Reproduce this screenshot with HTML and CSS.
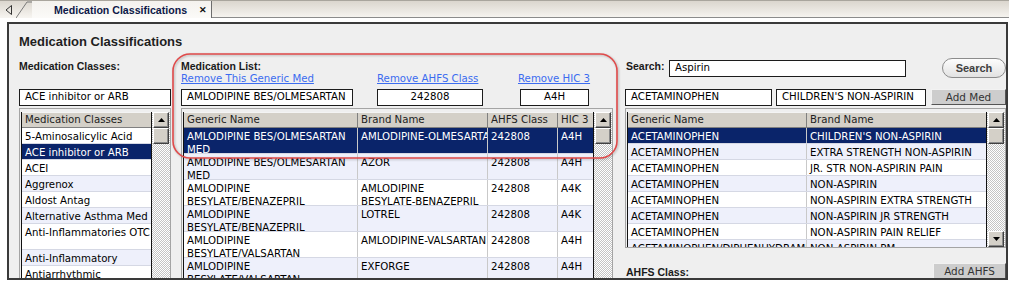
FILE: index.html
```html
<!DOCTYPE html>
<html lang="en">
<head>
    <meta charset="UTF-8">
    <title>Medication Classifications</title>
    <link rel="stylesheet" href="styles.css">
</head>
<body>
    <div class="tabbar">
        <div class="tab-nav">
            <svg width="8" height="10" viewBox="0 0 8 10"><polygon points="6.5,0.5 1,5 6.5,9.5" fill="none" stroke="#333" stroke-width="1"/></svg>
        </div>
        <svg class="tab-slant" width="16" height="17" viewBox="0 0 16 17"><path d="M0 17 L11 1 L16 1" fill="none" stroke="#7a7a7a" stroke-width="1"/></svg>
        <div class="tab">Medication Classifications <span class="tab-close">&#10005;</span></div>
        <div class="tab-rest"></div>
    </div>
    <div class="strip"></div>

    <div class="panel">
        <h1 class="title">Medication Classifications</h1>

        <div class="layout">
            <!-- classes -->
            <div class="col col-left">
                <div class="head">
                    <div class="label">Medication Classes:</div>
                </div>
                <div class="field">ACE inhibitor or ARB</div>
                <div class="frame">
                    <div class="grid-body">
                        <div class="row hd cols-one"><div>Medication Classes</div></div>
                        <div class="row cols-one"><div>5-Aminosalicylic Acid</div></div>
                        <div class="row sel cols-one"><div>ACE inhibitor or ARB</div></div>
                        <div class="row cols-one"><div>ACEI</div></div>
                        <div class="row alt cols-one"><div>Aggrenox</div></div>
                        <div class="row cols-one"><div>Aldost Antag</div></div>
                        <div class="row alt cols-one"><div>Alternative Asthma Med</div></div>
                        <div class="row tall cols-one"><div>Anti-Inflammatories OTC</div></div>
                        <div class="row alt cols-one"><div>Anti-Inflammatory</div></div>
                        <div class="row cols-one"><div>Antiarrhythmic</div></div>
                    </div>
                    <div class="scroll">
                        <div class="sb-btn"><svg width="7" height="4" viewBox="0 0 7 4"><polygon points="3.5,0 7,4 0,4" fill="#000"/></svg></div>
                        <div class="sb-btn"></div>
                    </div>
                </div>
            </div>

            <!-- medication list -->
            <div class="col col-mid">
                <div class="head">
                    <div class="label">Medication List:</div>
                    <div class="links">
                        <a class="link" href="#">Remove This Generic Med</a>
                        <a class="link" href="#">Remove AHFS Class</a>
                        <a class="link" href="#">Remove HIC 3</a>
                    </div>
                </div>
                <div class="fields">
                    <div class="field f-generic">AMLODIPINE BES/OLMESARTAN</div>
                    <div class="field f-ahfs center">242808</div>
                    <div class="field f-hic center">A4H</div>
                </div>
                <div class="frame">
                    <div class="grid-body">
                        <div class="row hd cols-mid"><div>Generic Name</div><div>Brand Name</div><div>AHFS Class</div><div>HIC 3</div></div>
                        <div class="row tall sel cols-mid"><div>AMLODIPINE BES/OLMESARTAN<br>MED</div><div>AMLODIPINE-OLMESARTAN</div><div>242808</div><div>A4H</div></div>
                        <div class="row tall alt cols-mid"><div>AMLODIPINE BES/OLMESARTAN<br>MED</div><div>AZOR</div><div>242808</div><div>A4H</div></div>
                        <div class="row tall cols-mid"><div>AMLODIPINE<br>BESYLATE/BENAZEPRIL</div><div>AMLODIPINE<br>BESYLATE-BENAZEPRIL</div><div>242808</div><div>A4K</div></div>
                        <div class="row tall alt cols-mid"><div>AMLODIPINE<br>BESYLATE/BENAZEPRIL</div><div>LOTREL</div><div>242808</div><div>A4K</div></div>
                        <div class="row tall cols-mid"><div>AMLODIPINE<br>BESYLATE/VALSARTAN</div><div>AMLODIPINE-VALSARTAN</div><div>242808</div><div>A4H</div></div>
                        <div class="row tall alt cols-mid"><div>AMLODIPINE<br>BESYLATE/VALSARTAN</div><div>EXFORGE</div><div>242808</div><div>A4H</div></div>
                    </div>
                    <div class="scroll">
                        <div class="sb-btn"><svg width="7" height="4" viewBox="0 0 7 4"><polygon points="3.5,0 7,4 0,4" fill="#000"/></svg></div>
                        <div class="sb-btn"></div>
                    </div>
                </div>
            </div>

            <!-- search -->
            <div class="col col-right">
                <div class="head search-head">
                    <div class="label">Search:</div>
                    <div class="field f-search">Aspirin</div>
                    <button class="btn-search">Search</button>
                </div>
                <div class="fields-right">
                    <div class="field f-rgeneric">ACETAMINOPHEN</div>
                    <div class="field f-rbrand">CHILDREN'S NON-ASPIRIN</div>
                    <button class="btn btn-addmed">Add Med</button>
                </div>
                <div class="frame frame-fixed">
                    <div class="grid-body">
                        <div class="row hd cols-right"><div>Generic Name</div><div>Brand Name</div></div>
                        <div class="row sel cols-right"><div>ACETAMINOPHEN</div><div>CHILDREN'S NON-ASPIRIN</div></div>
                        <div class="row alt cols-right"><div>ACETAMINOPHEN</div><div>EXTRA STRENGTH NON-ASPIRIN</div></div>
                        <div class="row cols-right"><div>ACETAMINOPHEN</div><div>JR. STR NON-ASPIRIN PAIN</div></div>
                        <div class="row alt cols-right"><div>ACETAMINOPHEN</div><div>NON-ASPIRIN</div></div>
                        <div class="row cols-right"><div>ACETAMINOPHEN</div><div>NON-ASPIRIN EXTRA STRENGTH</div></div>
                        <div class="row alt cols-right"><div>ACETAMINOPHEN</div><div>NON-ASPIRIN JR STRENGTH</div></div>
                        <div class="row cols-right"><div>ACETAMINOPHEN</div><div>NON-ASPIRIN PAIN RELIEF</div></div>
                        <div class="row alt cols-right"><div>ACETAMINOPHEN/DIPHENHYDRAMINE</div><div>NON-ASPIRIN PM</div></div>
                    </div>
                    <div class="scroll">
                        <div class="sb-btn"><svg width="7" height="4" viewBox="0 0 7 4"><polygon points="3.5,0 7,4 0,4" fill="#000"/></svg></div>
                        <div class="sb-btn"></div>
                        <div class="sb-btn sb-down"><svg width="7" height="4" viewBox="0 0 7 4"><polygon points="0,0 7,0 3.5,4" fill="#000"/></svg></div>
                    </div>
                </div>
                <div class="foot">
                    <div class="label">AHFS Class:</div>
                    <button class="btn btn-addahfs">Add AHFS</button>
                </div>
            </div>
        </div>

        <svg class="highlight" width="446" height="106" viewBox="0 0 446 106">
            <rect x="1" y="1" width="444" height="104" rx="17" ry="17" fill="none" stroke="#e04a4a" stroke-width="1.6"/>
        </svg>
    </div>
</body>
</html>
```

FILE: styles.css
```css
body {
    margin: 0;
    width: 1009px;
    height: 281px;
    overflow: hidden;
    background-color: #fff;
    font-family: "DejaVu Sans", Verdana, sans-serif;
    font-size: 10.2px;
    color: #000;
}

/* tab strip */
.tabbar {
    display: flex;
    height: 18px;
    box-sizing: border-box;
    border-top: 1px solid #a9a59d;
    background: linear-gradient(#dbd6ce, #f7f5f1);
}
.tab-nav {
    width: 14px;
    display: flex;
    align-items: center;
    justify-content: center;
    padding-left: 2px;
}
.tab-slant {
    display: block;
}
.tab {
    width: 180px;
    box-sizing: border-box;
    display: flex;
    align-items: center;
    padding-left: 22px;
    background: linear-gradient(#f4f2ee, #fbfaf8);
    border-right: 1px solid #6d6d6d;
    font-family: "Liberation Sans", Arial, sans-serif;
    font-weight: bold;
    font-size: 10.6px;
    color: #0d1848;
}
.tab-close {
    margin-left: 12px;
    color: #111;
    font-size: 9px;
    font-weight: bold;
}
.tab-rest {
    flex: 1;
    border-bottom: 1px solid #8b8b8b;
}
.strip {
    height: 4px;
}

/* main panel */
.panel {
    position: relative;
    margin-left: 7px;
    width: 1001px;
    height: 258px;
    box-sizing: border-box;
    border: 2px solid #3a3a3a;
    background-color: #efefef;
    padding: 10px 0 0 10px;
    overflow: hidden;
}
.title {
    margin: 0;
    font-family: "Liberation Sans", Arial, sans-serif;
    font-weight: bold;
    font-size: 13px;
    line-height: 15px;
    color: #1e1e1e;
}
.layout {
    display: flex;
    margin-top: 9px;
}
.col-left {
    width: 152px;
    margin-right: 10px;
}
.col-mid {
    width: 432px;
    margin-right: 12px;
}
.col-right {
    width: 381px;
}
.head {
    height: 31px;
    box-sizing: border-box;
    padding-top: 1.5px;
}
.label {
    font-family: "Liberation Sans", Arial, sans-serif;
    font-weight: bold;
    font-size: 10.5px;
    line-height: 13px;
    color: #1a1a1a;
}
.links {
    display: grid;
    grid-template-columns: 196px 141px auto;
    line-height: 12px;
}
.link {
    color: #3b6cf0;
    text-decoration: underline;
    justify-self: start;
}

/* text boxes */
.field {
    box-sizing: border-box;
    height: 17px;
    border: 1px solid #1c1c1c;
    background-color: #fff;
    padding: 0 5px;
    line-height: 14px;
    white-space: nowrap;
    overflow: hidden;
}
.center {
    text-align: center;
}
.fields {
    display: grid;
    grid-template-columns: 196px 143px auto;
}
.f-generic { width: 172px; }
.f-ahfs { width: 106px; }
.f-hic { width: 69px; }

.search-head {
    display: flex;
    align-items: flex-start;
    padding-top: 0;
}
.search-head .label {
    width: 43px;
    padding-left: 1px;
    padding-top: 1.5px;
}
.f-search {
    width: 237px;
    margin-top: 2px;
}
.btn-search {
    margin-left: auto;
    width: 64px;
    height: 20px;
    padding: 0;
    border: 1px solid #8c8c8c;
    border-radius: 10px;
    background: linear-gradient(#fdfdfd, #e2e2e2);
    font-family: "Liberation Sans", Arial, sans-serif;
    font-weight: bold;
    font-size: 11px;
    color: #404040;
}
.fields-right {
    display: flex;
}
.f-rgeneric { width: 147px; margin-right: 4px; }
.f-rbrand { width: 150px; margin-right: 5px; }
.btn {
    box-sizing: border-box;
    height: 16px;
    padding: 0;
    background-color: #cdcdcd;
    border: 1px solid;
    border-color: #f2f2f2 #555 #555 #f2f2f2;
    font-family: "DejaVu Sans", Verdana, sans-serif;
    font-size: 10.4px;
    line-height: 13px;
    color: #333;
}
.btn-addmed { width: 75px; }
.btn-addahfs { width: 73px; }

/* list grids */
.frame {
    display: flex;
    margin-top: 2px;
    border: 1px solid #a4a4a4;
    padding: 3px 0 0 1px;
}
.frame-fixed {
    height: 140px;
    box-sizing: border-box;
    overflow: hidden;
}
.grid-body {
    flex: 1;
    min-width: 0;
    background-color: #fff;
    border-left: 1px solid #111;
    border-right: 1px solid #111;
}
.row {
    display: grid;
    height: 16px;
    box-sizing: border-box;
    border-bottom: 1px solid #d5d8e4;
    overflow: hidden;
}
.row.tall { height: 26px; }
.row.alt { background-color: #eef0fb; }
.row.sel { background-color: #0a246a; color: #fff; }
.row > div {
    padding: 3px 2px 0 3px;
    line-height: 12.5px;
    white-space: nowrap;
    overflow: hidden;
    border-right: 1px solid #c9c9c9;
}
.row > div:last-child {
    border-right: none;
}
.row.hd {
    background-color: #d4d0c8;
    border-top: 1px solid #f4f4f4;
    border-bottom: 1px solid #808080;
    color: #222;
}
.row.hd > div {
    padding-top: 1px;
    border-right: 1px solid #808080;
}
.row.hd > div:last-child {
    border-right: none;
}
.cols-one { grid-template-columns: 1fr; }
.cols-mid { grid-template-columns: 174px 130px 70px 35px; }
.cols-right { grid-template-columns: 179px 1fr; }

.scroll {
    width: 18px;
    display: flex;
    flex-direction: column;
    background-color: #fff;
    background-image: repeating-conic-gradient(#c4c4c4 0 25%, #fff 0 50%);
    background-size: 2px 2px;
}
.sb-btn {
    width: 16px;
    height: 16px;
    margin-left: 1px;
    box-sizing: border-box;
    display: flex;
    align-items: center;
    justify-content: center;
    background-color: #d4d0c8;
    border: 1px solid;
    border-color: #fff #404040 #404040 #fff;
    box-shadow: inset -1px -1px #8a8a8a;
}
.sb-down {
    margin-top: auto;
}

.foot {
    display: flex;
    justify-content: space-between;
    align-items: flex-end;
    margin-top: 15px;
}
.foot .label {
    padding-left: 1px;
}

/* annotation ring drawn over the list */
.highlight {
    position: absolute;
    left: 163px;
    top: 29px;
    filter: drop-shadow(1px 1px 1px rgba(0, 0, 0, 0.25));
}
```
